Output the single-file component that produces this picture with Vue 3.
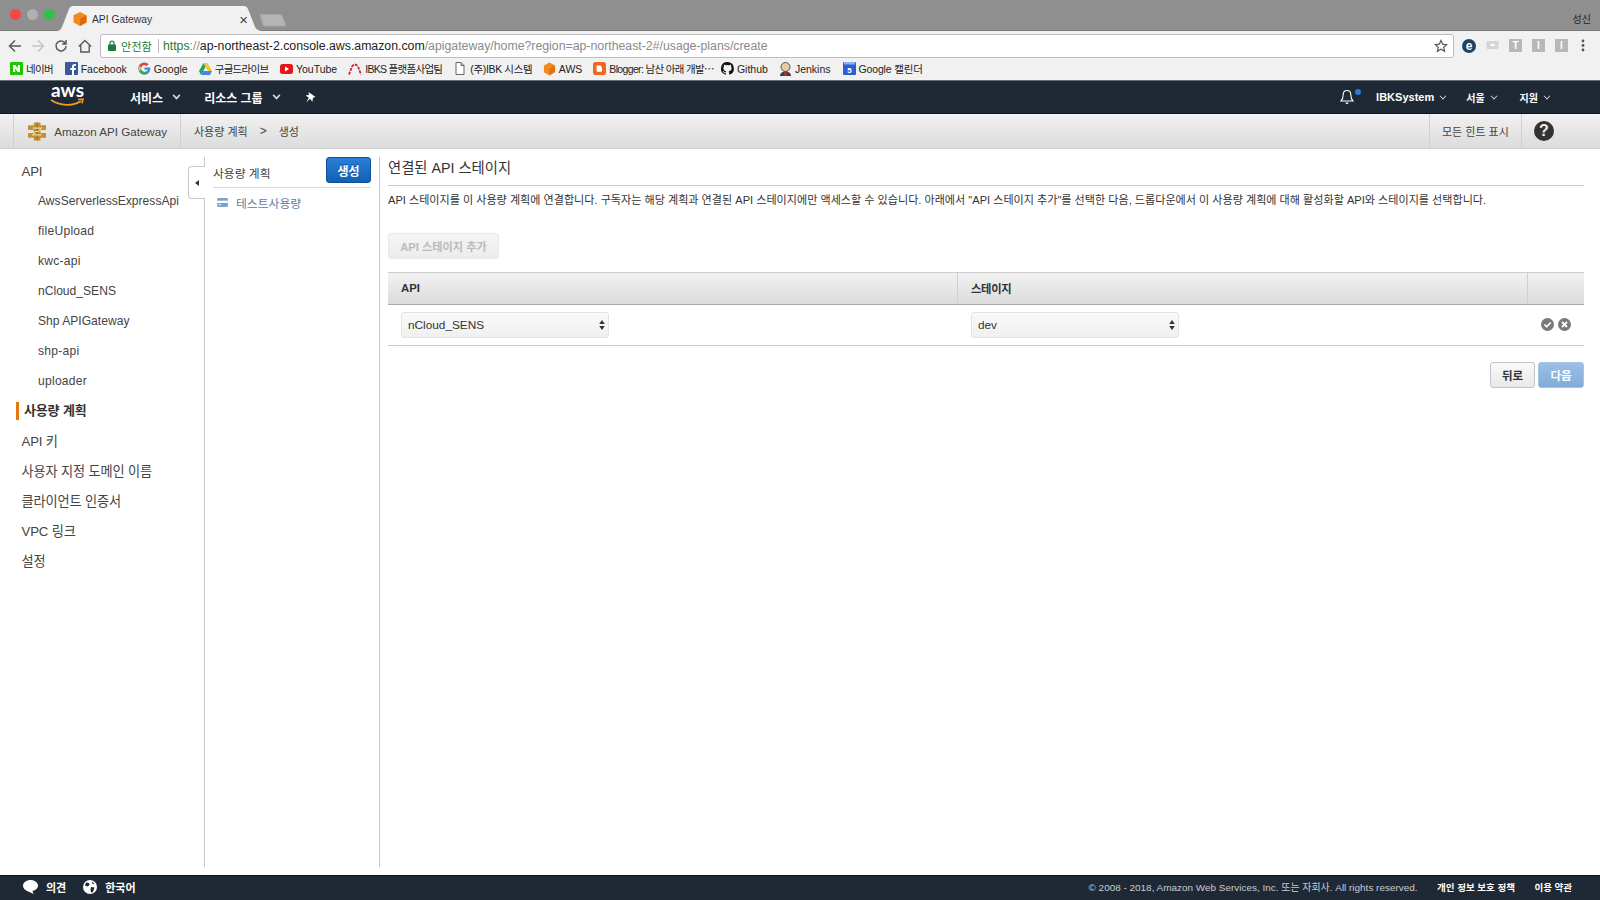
<script setup>
const apis = [
  { name: 'AwsServerlessExpressApi' },
  { name: 'fileUpload', wide: true },
  { name: 'kwc-api', wide: true },
  { name: 'nCloud_SENS' },
  { name: 'Shp APIGateway' },
  { name: 'shp-api', wide: true },
  { name: 'uploader', wide: true }
]
const others = ['API 키', '사용자 지정 도메인 이름', '클라이언트 인증서', 'VPC 링크', '설정']
</script>

<template>
  <div class="page">
    <div class="tabstrip">
      <div class="lights"><i class="red"></i><i class="grey"></i><i class="green"></i></div>
      <div class="tab">
        <svg class="tabshape" width="208" height="25" viewBox="0 0 208 25"><path d="M0 25c4 0 5-2 6-4L13 3c1-2 2-3 4-3h171c2 0 3 1 4 3l7 18c1 2 3 4 9 4z" fill="#f1f1f1"/></svg>
        <svg class="tabicon" width="14" height="14" viewBox="0 0 14 14"><path d="M7 0l6.500 3.200v7.400L7 14 .5 10.600V3.200z" fill="#f08a1d"/><path d="M7 7l6.500-3.800v7.400L7 14z" fill="#d96b0c"/></svg>
        <span class="tabtitle">API Gateway</span>
        <span class="tabclose">×</span>
      </div>
      <svg class="newtab" width="28" height="13" viewBox="0 0 28 13"><path d="M1 .5h20c1 0 1.500.4 2 1l4 10.500H6c-1 0-1.500-.4-2-1z" fill="#b4b4b4" stroke="#a4a4a4"/></svg>
      <span class="profile">성신</span>
    </div>

    <div class="toolbar">
      <svg class="tool" width="14" height="14" viewBox="0 0 14 14" fill="none" stroke="#5a5a5a" stroke-width="1.500"><path d="M13 7H2M7 1.500L1.500 7 7 12.500"/></svg>
      <svg class="tool" width="14" height="14" viewBox="0 0 14 14" fill="none" stroke="#c6c6c6" stroke-width="1.500"><path d="M1 7h11M7 1.500L12.500 7 7 12.500"/></svg>
      <svg class="tool reload" width="14" height="14" viewBox="0 0 14 14" fill="none" stroke="#5a5a5a" stroke-width="1.500"><path d="M12 7a5 5 0 1 1-1.500-3.600L12 5M12 1v4H8"/></svg>
      <svg class="tool home" width="14" height="14" viewBox="0 0 14 14" fill="none" stroke="#5a5a5a" stroke-width="1.400"><path d="M.8 7.500L7 1.500l6.200 6M2.800 6.500v6.500h8.400V6.500"/></svg>
      <div class="omnibox">
        <svg width="8" height="11" viewBox="0 0 8 11"><path d="M2 5V3.200a2 2 0 0 1 4 0V5" fill="none" stroke="#1b7a3d" stroke-width="1.200"/><rect y="4.500" width="8" height="6.500" rx="1" fill="#1b7a3d"/></svg>
        <span class="secure">안전함</span>
        <span class="omnisep"></span>
        <span class="url"><b class="https">https</b><span class="dim">://</span><span class="host">ap-northeast-2.console.aws.amazon.com</span><span class="dim">/apigateway/home?region=ap-northeast-2#/usage-plans/create</span></span>
        <svg class="star" width="14" height="14" viewBox="0 0 14 14"><path d="M7 1.500l1.700 3.700 4 .4-3 2.700.9 4L7 10.300l-3.600 2 .9-4-3-2.700 4-.4z" fill="none" stroke="#555" stroke-width="1.200"/></svg>
      </div>
      <div class="exts">
        <span class="ext-e">e</span>
        <svg width="13" height="9" viewBox="0 0 12 9"><rect width="12" height="8" rx="1" fill="#d5d5d5"/><rect x="4" y="3" width="4" height="2" fill="#fff"/></svg>
        <span class="ext-box t">T</span>
        <span class="ext-box i">I</span>
        <span class="ext-box i">I</span>
        <svg width="4" height="13" viewBox="0 0 4 13"><circle cx="2" cy="2" r="1.400" fill="#555"/><circle cx="2" cy="6.500" r="1.400" fill="#555"/><circle cx="2" cy="11" r="1.400" fill="#555"/></svg>
      </div>
    </div>

    <div class="bookmarks">
      <span class="bm k1"><svg width="13" height="13" viewBox="0 0 13 13"><rect width="13" height="13" rx="1" fill="#1ec800"/><path d="M3 3h2.300l2.500 3.500V3H10v7H7.700L5.200 6.500V10H3z" fill="#fff"/></svg>네이버</span>
      <span class="bm"><svg width="13" height="13" viewBox="0 0 13 13"><rect width="13" height="13" rx="1" fill="#3b5998"/><path d="M9 13V8h1.700l.3-2H9V4.800c0-.6.200-1 1-1h1V2.100C10.500 2 10 2 9.500 2 8 2 7 3 7 4.600V6H5.300v2H7v5z" fill="#fff"/></svg>Facebook</span>
      <span class="bm"><svg width="13" height="13" viewBox="0 0 13 13"><path d="M6.500 5.400v2.300h3.200c-.3 1.300-1.500 2.200-3.200 2.200a3.400 3.400 0 0 1 0-6.800c.9 0 1.600.3 2.200.8l1.700-1.700A6 6 0 1 0 6.500 12.500c3.400 0 5.800-2.400 5.800-5.900 0-.4 0-.8-.1-1.200z" fill="#4285f4"/><path d="M1.200 3.700l2 1.500a3.400 3.400 0 0 1 3.300-2.100c.9 0 1.600.3 2.200.8l1.700-1.700A6 6 0 0 0 1.200 3.700z" fill="#ea4335"/><path d="M1.200 9.300l2-1.500A3.400 3.400 0 0 1 3.100 5.200l-2-1.500a6 6 0 0 0 .1 5.600z" fill="#fbbc05"/><path d="M1.200 9.300a6 6 0 0 0 5.300 3.200c1.500 0 2.900-.5 3.900-1.500L8.500 9.400c-.5.300-1.200.5-2 .5a3.400 3.400 0 0 1-3.300-2.100z" fill="#34a853"/></svg>Google</span>
      <span class="bm k2"><svg width="13" height="12" viewBox="0 0 13 12"><path d="M4.500 0h4l4.500 8H9z" fill="#fbc02d"/><path d="M4.500 0L0 8l2 4 4.500-8z" fill="#1ea362"/><path d="M2 12h9l2-4H4.200z" fill="#4285f4"/></svg>구글드라이브</span>
      <span class="bm"><svg width="13" height="10" viewBox="0 0 13 10"><rect width="13" height="10" rx="2.500" fill="#e8141c"/><path d="M5 2.500l4 2.500-4 2.500z" fill="#fff"/></svg>YouTube</span>
      <span class="bm k3"><svg width="14" height="12" viewBox="0 0 14 12"><path d="M1 11.500L4 3.500Q7 -.5 10 3.500l3 8" fill="none" stroke="#c4202b" stroke-width="1.800" stroke-dasharray="3 1"/></svg>IBKS 플랫폼사업팀</span>
      <span class="bm k4"><svg width="11" height="13" viewBox="0 0 11 13"><path d="M2 .5h5l3 3v9H2zM7 .5v3h3" fill="#fff" stroke="#666"/></svg>(주)IBK 시스템</span>
      <span class="bm"><svg width="13" height="14" viewBox="0 0 14 14"><path d="M7 0l6 3.200v7.400L7 14l-6-3.400V3.200z" fill="#f08a1d"/><path d="M7 7l6-3.800v6.400L7 14z" fill="#e0720f"/></svg>AWS</span>
      <span class="bm k5"><svg width="13" height="13" viewBox="0 0 13 13"><rect width="13" height="13" rx="2.500" fill="#f4661f"/><path d="M4 3.500h3a1.500 1.500 0 0 1 1.500 1.500v.8h.5v3a1 1 0 0 1-1 1H4.500a1 1 0 0 1-1-1V4a.5.500 0 0 1 .5-.5z" fill="#fff"/></svg>Blogger: 남산 아래 개발⋯</span>
      <span class="bm"><svg width="13" height="13" viewBox="0 0 16 16"><path d="M8 0a8 8 0 0 0-2.500 15.600c.4.100.5-.2.500-.4v-1.400c-2.200.5-2.700-1-2.700-1-.4-.9-.9-1.200-.9-1.200-.7-.5.100-.5.100-.5.800.1 1.200.8 1.200.8.700 1.200 1.900.9 2.300.7.100-.5.300-.9.500-1.100-1.800-.2-3.600-.9-3.600-4 0-.9.300-1.600.8-2.100-.1-.2-.4-1 .1-2.100 0 0 .7-.2 2.200.8a7.600 7.600 0 0 1 4 0c1.500-1 2.200-.8 2.200-.8.500 1.100.2 1.900.1 2.100.5.600.8 1.300.8 2.100 0 3.100-1.900 3.700-3.700 3.900.3.300.6.800.6 1.500v2.200c0 .2.100.5.600.4A8 8 0 0 0 8 0z" fill="#111"/></svg>Github</span>
      <span class="bm k7"><svg width="13" height="14" viewBox="0 0 13 14"><circle cx="6.500" cy="5" r="4.500" fill="#e8c9a8" stroke="#555"/><path d="M1 14c0-3 2-4.500 5.500-4.500S12 11 12 14z" fill="#3a3f4a"/><rect x="5.500" y="10" width="2" height="4" fill="#c4302b"/></svg>Jenkins</span>
      <span class="bm k6"><svg width="13" height="13" viewBox="0 0 13 13"><rect width="13" height="13" rx="1" fill="#2a5fd4"/><rect x="1" y="0" width="11" height="2.500" fill="#8fb0ee"/><text x="6.500" y="10.500" font-size="8" font-weight="700" fill="#fff" text-anchor="middle" font-family="Liberation Sans">5</text></svg>Google 캘린더</span>
    </div>

    <nav class="topnav">
      <svg class="awslogo" width="35" height="32" viewBox="0 -4 35 32">
        <text x="17.500" y="14" font-size="18" fill="#fff" text-anchor="middle" font-family="Lato" textLength="33" lengthAdjust="spacingAndGlyphs">aws</text>
        <path d="M1 17c9 6 22 6.500 30 1" fill="none" stroke="#f29a1f" stroke-width="1.800"/>
        <path d="M28 16.500l5-.5-1 4.500" fill="none" stroke="#f29a1f" stroke-width="1.500"/>
      </svg>
      <span class="navitem first">서비스<i class="chev big"></i></span>
      <span class="navitem second">리소스 그룹<i class="chev big"></i></span>
      <svg class="pin" width="11" height="11" viewBox="0 0 11 11"><path d="M3.500 0l7 5-2.500.8-.6 4-2.400-3L1 10.500l2.800-4.700-3-2.200 3.300-.9z" fill="#fff"/></svg>
      <span class="navspace"></span>
      <span class="bell"><svg width="14" height="16" viewBox="0 0 14 16"><path d="M7 1.500c-2.500 0-3.800 1.800-3.800 4.300 0 3-.7 4.700-2.200 6.200h12c-1.500-1.500-2.200-3.200-2.200-6.200C10.800 3.300 9.500 1.500 7 1.500z" fill="none" stroke="#fff" stroke-width="1.100"/><path d="M5.500 13.500a1.500 1.500 0 0 0 3 0z" fill="#fff"/></svg><i class="dot"></i></span>
      <span class="navright acct">IBKSystem<i class="chev"></i></span>
      <span class="navright kr">서울<i class="chev"></i></span>
      <span class="navright kr last">지원<i class="chev"></i></span>
    </nav>

    <div class="subnav">
      <div class="brand">
        <svg width="19" height="19" viewBox="0 0 19 19"><g fill="#c2922f"><rect x="6" y="0" width="7" height="19" rx="1"/><rect x="0" y="3" width="19" height="5" rx=".5"/><rect x="0" y="11" width="19" height="5" rx=".5"/></g><path d="M9.500 0v19" stroke="#8f6a1f" stroke-width="1"/><path d="M5 6h9l-3 3.500H8L5 13h9" fill="none" stroke="#ecd9a6" stroke-width="1.100"/></svg>
        <span>Amazon API Gateway</span>
      </div>
      <div class="crumbs"><span>사용량 계획</span><span class="gt">&gt;</span><span>생성</span></div>
      <span class="subspace"></span>
      <div class="hints">모든 힌트 표시</div>
      <div class="help"><span>?</span></div>
    </div>

    <div class="main">
      <aside class="side">
        <a class="s-top">API</a>
        <a v-for="a in apis" :key="a.name" class="s-sub" :class="{ wide: a.wide }">{{ a.name }}</a>
        <a class="s-top active">사용량 계획</a>
        <a v-for="o in others" :key="o" class="s-top">{{ o }}</a>
        <span class="collapse"><i></i></span>
      </aside>

      <section class="plans">
        <div class="plans-head">
          <span>사용량 계획</span>
          <button class="create">생성</button>
        </div>
        <div class="plan-item">
          <svg width="11" height="9" viewBox="0 0 12 10"><rect width="12" height="10" rx="1.500" fill="#7ba2cf"/><rect y="3" width="12" height="2.500" fill="#fff"/><rect x="1.500" y="7" width="3" height="1" fill="#fff"/></svg>
          <span>테스트사용량</span>
        </div>
      </section>

      <section class="content">
        <h2>연결된 API 스테이지</h2>
        <p class="desc">API 스테이지를 이 사용량 계획에 연결합니다. 구독자는 해당 계획과 연결된 API 스테이지에만 액세스할 수 있습니다. 아래에서 "API 스테이지 추가"를 선택한 다음, 드롭다운에서 이 사용량 계획에 대해 활성화할 API와 스테이지를 선택합니다.</p>
        <button class="add" disabled>API 스테이지 추가</button>
        <div class="thead">
          <div class="c1">API</div>
          <div class="c2">스테이지</div>
          <div class="c3"></div>
        </div>
        <div class="trow">
          <div class="c1"><div class="select"><span>nCloud_SENS</span><svg width="6" height="12" viewBox="0 0 6 12"><path d="M3 1l2.800 4H.2zM3 11L.2 7h5.600z" fill="#333"/></svg></div></div>
          <div class="c2"><div class="select"><span>dev</span><svg width="6" height="12" viewBox="0 0 6 12"><path d="M3 1l2.800 4H.2zM3 11L.2 7h5.600z" fill="#333"/></svg></div></div>
          <div class="c3">
            <svg width="13" height="13" viewBox="0 0 13 13"><circle cx="6.500" cy="6.500" r="6.500" fill="#7a7a7a"/><path d="M3.500 6.500l2.200 2.300 4-4.300" fill="none" stroke="#fff" stroke-width="1.800"/></svg>
            <svg width="13" height="13" viewBox="0 0 13 13"><circle cx="6.500" cy="6.500" r="6.500" fill="#7a7a7a"/><path d="M4 4l5 5M9 4l-5 5" fill="none" stroke="#fff" stroke-width="1.800"/></svg>
          </div>
        </div>
        <div class="actions">
          <button class="back">뒤로</button>
          <button class="next" disabled>다음</button>
        </div>
      </section>
    </div>

    <footer class="footer">
      <svg class="fb" width="15" height="14" viewBox="0 0 15 14"><path d="M7.500 0C3.400 0 0 2.500 0 5.800c0 2.500 1.900 4.600 4.700 5.400l6 2.800-1.300-3c3.300-.7 5.600-2.800 5.600-5.200C15 2.500 11.600 0 7.500 0z" fill="#fff"/></svg>
      <b class="f1">의견</b>
      <svg class="globe" width="14" height="14" viewBox="0 0 14 14"><circle cx="7" cy="7" r="7" fill="#fff"/><path d="M3 2.500l3 .5.500 2-2 1.500-2.500-1zM8 7l3.500.5L10 12l-2 .5-.5-3zM9 1.500l2.500 2-2 .5z" fill="#1f2936"/></svg>
      <b class="f2">한국어</b>
      <span class="fspace"></span>
      <span class="copy">© 2008 - 2018, Amazon Web Services, Inc. 또는 자회사. All rights reserved.</span>
      <b class="f3">개인 정보 보호 정책</b>
      <b class="f4">이용 약관</b>
    </footer>
  </div>
</template>

<style scoped>
.page {
  width: 1600px;
  height: 900px;
  display: flex;
  flex-direction: column;
  overflow: hidden;
  background: #fff;
  font-family: "Liberation Sans", "Noto Sans CJK KR", sans-serif;
  color: #333;
}
.tabstrip {
  height: 31px;
  flex: none;
  background: #8f8f8f;
  border-bottom: 1px solid #7b7b7b;
  box-sizing: border-box;
  display: flex;
  align-items: flex-end;
  position: relative;
}
.lights { display: flex; gap: 6px; margin: 0 0 10px 10px; width: 50px; }
.lights i { width: 11px; height: 11px; border-radius: 50%; display: block; }
.red { background: #f0494a; }
.grey { background: #b0b0b0; }
.green { background: #34c04a; }
.tab { width: 208px; height: 24px; position: relative; display: flex; align-items: center; margin-left: -4px; flex: none; margin-bottom: -1px; }
.tabshape { position: absolute; left: 0; top: -1px; }
.tabicon { position: relative; margin-left: 17px; }
.tabtitle { position: relative; font-size: 10.300px; margin-left: 5px; color: #333; flex: 1; }
.tabclose { position: relative; font-size: 15px; color: #444; margin-right: 16px; }
.newtab { margin: 0 0 3px -5px; }
.profile { position: absolute; right: 9px; top: 11px; font-size: 10px; color: #222; }
.toolbar { height: 28px; flex: none; background: #f1f1f1; display: flex; align-items: center; padding: 1px 0 0 8px; box-sizing: border-box; }
.tool { margin-right: 9px; flex: none; }
.reload { margin-right: 10px; }
.home { margin-right: 8px; }
.omnibox {
  width: 1354px;
  height: 24px;
  box-sizing: border-box;
  background: #fff;
  border: 1px solid #bcbcbc;
  border-radius: 3px;
  display: flex;
  align-items: center;
  padding: 0 5px 0 7px;
  flex: none;
}
.secure { color: #1b7a3d; font-size: 11.200px; margin-left: 5px; }
.omnisep { width: 1px; height: 14px; background: #bcbcbc; margin: 0 4px 0 6px; }
.url { font-size: 12.300px; flex: 1; white-space: nowrap; }
.https { color: #1b7a3d; font-weight: 400; }
.dim { color: #8a8a8a; }
.host { color: #222; }
.exts { display: flex; align-items: center; margin-left: 8px; gap: 10px; }
.ext-e { width: 14px; height: 14px; border-radius: 50%; background: #1c4463; color: #fff; font-size: 12px; font-weight: 700; display: flex; align-items: center; justify-content: center; line-height: 1; }
.ext-box { width: 13px; height: 13px; background: #b8b8b8; color: #fff; font-size: 10px; font-weight: 700; display: flex; align-items: center; justify-content: center; }
.exts svg:last-child { margin-left: 3px; }
.bookmarks { height: 22px; flex: none; background: #f1f1f1; border-bottom: 1px solid #6b6f75; display: flex; align-items: center; padding: 0 0 2px 10px; box-sizing: border-box; gap: 11px; white-space: nowrap; }
.bm { display: flex; align-items: center; gap: 3px; font-size: 10.500px; color: #222; }
.k1 { letter-spacing: -.6px; margin-right: .5px; }
.k2 { letter-spacing: -.7px; margin-right: .5px; }
.k3 { letter-spacing: -.7px; margin-right: 1px; }
.k4 { letter-spacing: -.35px; gap: 5px; margin-right: -.5px; }
.k5 { letter-spacing: -.65px; margin-right: -4px; }
.k6 { letter-spacing: -.15px; }
.k7 { margin-right: 1px; }
.topnav { height: 33px; flex: none; background: #1f2936; border-bottom: 1px solid #0e141c; box-sizing: border-box; color: #fff; display: flex; align-items: center; font-size: 12px; font-weight: 700; }
.awslogo { margin-left: 50px; flex: none; margin-top: -4px; }
.navitem { display: flex; align-items: center; }
.first { margin-left: 45px; }
.second { margin-left: 24px; }
.pin { margin-left: 25px; }
.navspace { flex: 1; }
.chev { width: 5px; height: 5px; border-right: 1.500px solid #d8d8d8; border-bottom: 1.500px solid #d8d8d8; transform: rotate(45deg) scale(.8); margin: -3px 0 0 6px; display: block; }
.chev.big { width: 5px; height: 5px; border-width: 2px; margin-left: 10px; }
.bell { position: relative; display: flex; margin-right: 22px; }
.dot { position: absolute; width: 6px; height: 6px; border-radius: 50%; background: #2b7cd3; right: -7px; top: 0; }
.navright { display: flex; align-items: center; font-size: 11px; margin-right: 23px; }
.navright.acct { margin-right: 20px; }
.navright.kr { font-size: 10px; }
.navright.last { margin-right: 50px; }
.subnav { height: 35px; flex: none; background: linear-gradient(#f1f1f1, #dcdcdc); border-bottom: 1px solid #d0d0d0; box-sizing: border-box; display: flex; align-items: stretch; font-size: 11px; color: #444; padding-left: 13px; }
.brand { display: flex; align-items: center; border-left: 1px solid #d0d0d0; border-right: 1px solid #d0d0d0; padding: 0 13px 0 14px; gap: 8px; width: 168px; box-sizing: border-box; white-space: nowrap; font-size: 11.600px; }
.crumbs { display: flex; align-items: center; padding-left: 13px; gap: 12px; }
.gt { font-size: 12px; }
.subspace { flex: 1; }
.hints { display: flex; align-items: center; border-left: 1px solid #d0d0d0; border-right: 1px solid #d0d0d0; padding: 0 13px 0 12px; width: 93px; box-sizing: border-box; white-space: nowrap; }
.help { width: 78px; box-sizing: border-box; padding-left: 12px; display: flex; align-items: center; }
.help span { width: 20px; height: 20px; border-radius: 50%; background: #333; color: #eee; display: flex; align-items: center; justify-content: center; font-size: 16px; font-weight: 700; }
.main { flex: 1; display: flex; min-height: 0; padding: 8px 0; }
.side { width: 205px; flex: none; border-right: 1px solid #c8c8c8; box-sizing: border-box; position: relative; }
.side a { display: block; height: 30px; line-height: 30px; color: #444; white-space: nowrap; }
.side a:first-child { margin-top: -1px; }
.side a.s-top { line-height: 31px; }
.s-top { padding-left: 21.500px; font-size: 13.200px; letter-spacing: -.15px; }
.s-sub { padding-left: 38px; font-size: 12.100px; }
.s-sub.wide { letter-spacing: .25px; }
.side a.s-top.active { font-weight: 700; color: #333; padding-left: 8px; margin-left: 16px; position: relative; font-size: 13px; line-height: 30px; }
.s-top.active::before { content: ""; position: absolute; left: 0; top: 6px; width: 3px; height: 18px; background: #e47911; }
.collapse { position: absolute; right: -1px; top: 9px; width: 17px; height: 33px; background: #fff; border: 1px solid #c8c8c8; border-right: 0; border-radius: 4px 0 0 4px; box-sizing: border-box; display: flex; align-items: center; padding-left: 6px; }
.collapse i { border: 3.500px solid transparent; border-right: 4px solid #333; border-left: 0; display: block; }
.plans { width: 175px; flex: none; border-right: 1px solid #c8c8c8; box-sizing: border-box; padding: 0 8px; }
.plans-head { height: 31px; display: flex; justify-content: space-between; border-bottom: 1px solid #d8d8d8; font-size: 11.800px; color: #444; box-sizing: border-box; }
.plans-head span { padding-top: 9px; line-height: 16px; }
.create { width: 45px; height: 26px; border: 1px solid #0e4f97; border-radius: 3px; background: linear-gradient(#2a7fd6, #1260b5); color: #fff; font: 700 12px "Liberation Sans", "Noto Sans CJK KR", sans-serif; padding: 0; text-shadow: 0 -1px 0 #0c4a8c; }
.plan-item { display: flex; align-items: center; padding: 6px 0 0 4px; gap: 8px; color: #5b80a8; font-size: 11.800px; }
.content { flex: 1; padding: 0 16px 0 8px; min-width: 0; }
h2 { margin: 0; font-weight: 400; font-size: 14.300px; line-height: 20px; color: #333; padding: 1px 0 7px; border-bottom: 1px solid #ccc; }
.desc { margin: 6px 0 0; font-size: 11.080px; line-height: 16px; color: #333; white-space: nowrap; }
.add { display: block; margin-top: 25px; width: 111px; height: 26px; border: 1px solid #e8e8e8; border-radius: 3px; background: linear-gradient(#f5f5f5, #ececec); color: #bbb; font: 700 11.200px "Liberation Sans", "Noto Sans CJK KR", sans-serif; padding: 0; }
.thead { margin-top: 13px; height: 33px; display: flex; background: linear-gradient(#f1f1f1, #dcdcdc); border-top: 1px solid #ccc; border-bottom: 1px solid #aaa; box-sizing: border-box; font-size: 11.300px; font-weight: 700; color: #333; }
.thead > div { display: flex; align-items: center; padding: 0 0 1px 13px; box-sizing: border-box; }
.thead .c1, .thead .c2 { border-right: 1px solid #d0d0d0; }
.thead .c2 { letter-spacing: -.3px; }
.c1 { width: 570px; }
.c2 { width: 570px; }
.c3 { flex: 1; }
.trow { height: 41px; display: flex; align-items: center; border-bottom: 1px solid #ccc; box-sizing: border-box; }
.trow .c1, .trow .c2 { padding-left: 13px; box-sizing: border-box; }
.trow .c3 { display: flex; justify-content: flex-end; gap: 4px; padding: 0 13px 2px 0; }
.select { width: 208px; height: 26px; border: 1px solid #e2e2e2; border-radius: 3px; background: linear-gradient(#fafafa, #f0f0f0); box-sizing: border-box; display: flex; align-items: center; justify-content: space-between; padding: 0 3px 0 6px; font-size: 11.800px; color: #333; }
.actions { display: flex; justify-content: flex-end; gap: 3px; margin-top: 16px; }
.actions button { height: 26px; border-radius: 3px; padding: 0; font: 700 11.500px "Liberation Sans", "Noto Sans CJK KR", sans-serif; }
.back { width: 45px; border: 1px solid #c4c4c4; background: linear-gradient(#fafafa, #e8e8e8); color: #333; }
.next { width: 46px; border: 1px solid #a4c4e4; background: linear-gradient(#9cc0e6, #80acd9); color: #fff; }
.footer { height: 25px; flex: none; background: #1f2936; border-top: 1px solid #0e141c; box-sizing: border-box; display: flex; align-items: center; color: #fff; font-size: 11px; padding-bottom: 3px; }
.footer b { font-weight: 700; white-space: nowrap; }
.fb { margin-left: 23px; }
.f1 { margin-left: 8px; }
.globe { margin-left: 17px; }
.f2 { margin-left: 8px; }
.fspace { flex: 1; }
.copy { color: #c8ccd0; font-size: 9.950px; white-space: nowrap; }
.footer .f3 { margin-left: 19.500px; font-size: 9.500px; }
.footer .f4 { margin-left: 19.500px; margin-right: 28px; font-size: 9.500px; }
</style>
